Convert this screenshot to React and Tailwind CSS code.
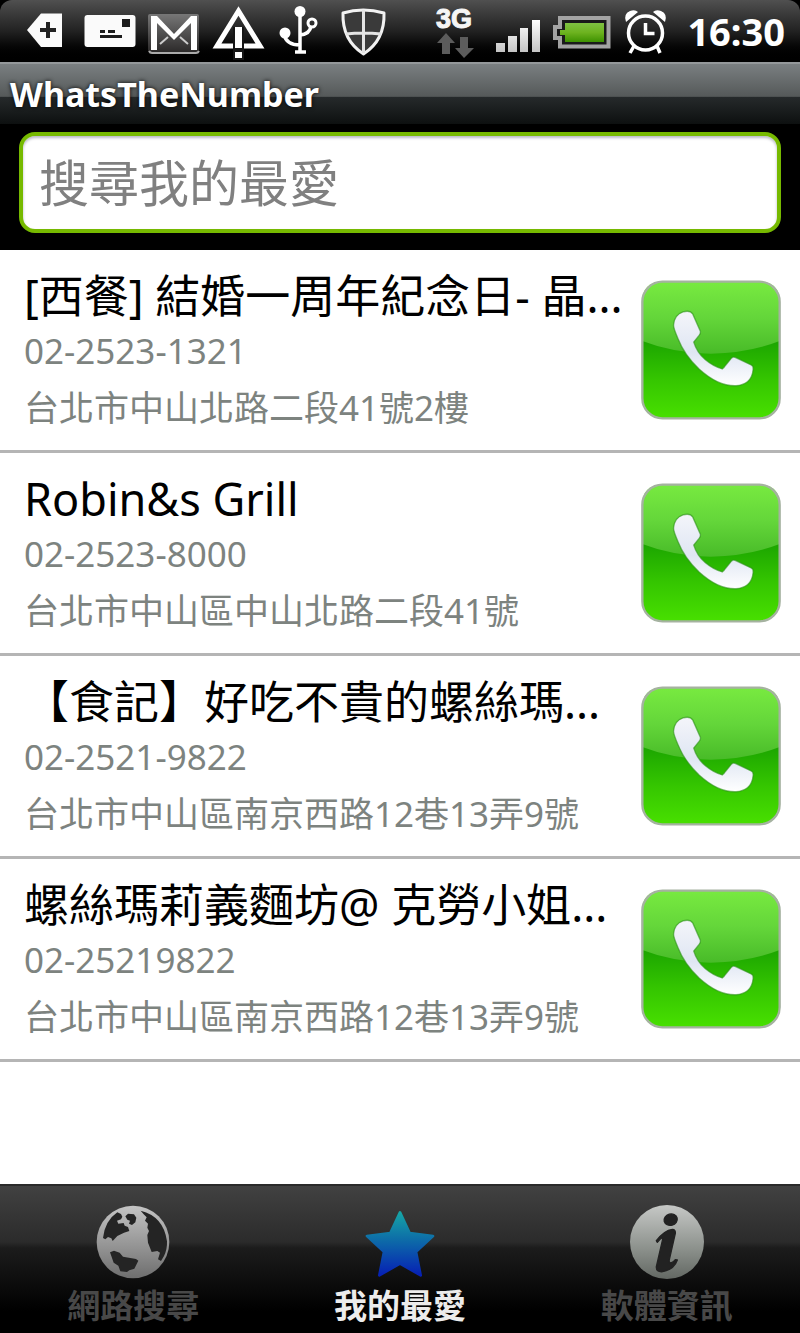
import { useState } from 'react'

const PLACES = [
  { name: '[西餐] 結婚一周年紀念日- 晶...', phone: '02-2523-1321', address: '台北市中山北路二段41號2樓' },
  { name: 'Robin&s Grill', phone: '02-2523-8000', address: '台北市中山區中山北路二段41號' },
  { name: '【食記】好吃不貴的螺絲瑪...', phone: '02-2521-9822', address: '台北市中山區南京西路12巷13弄9號' },
  { name: '螺絲瑪莉義麵坊@ 克勞小姐...', phone: '02-25219822', address: '台北市中山區南京西路12巷13弄9號' },
]

function NotificationIcons() {
  return (
    <div className="flex items-center pl-5">
      <svg width="54" height="62" viewBox="20 0 54 62" aria-hidden="true">
        <path d="M27 30 41 13.500H62V47H41Z" fill="#fafafa" />
        <path d="M48 22v16M40 30h16" stroke="#222" strokeWidth="4" />
      </svg>
      <svg width="67" height="62" viewBox="74 0 67 62" aria-hidden="true">
        <rect x="84.500" y="15" width="51" height="32" rx="3" fill="#fafafa" />
        <path d="M122 19h8v8h-8zM100 30h5v3h-5zM108 30h7v3h-7zM100 35h22v3h-22z" fill="#1c1c1c" />
      </svg>
      <svg width="65" height="62" viewBox="141 0 65 62" aria-hidden="true">
        <defs>
          <linearGradient id="mail" x1="0" y1="0" x2="0" y2="1">
            <stop offset="0" stopColor="#777" />
            <stop offset="1" stopColor="#2c2a2a" />
          </linearGradient>
        </defs>
        <rect x="148" y="14" width="51" height="38" rx="2" fill="url(#mail)" />
        <path d="m160 44 8-7M188 44l-8-7" stroke="#ccc" strokeWidth="2" />
        <path d="M151 16h6l17 18 17-18h6v34h-6V23l-17 17-17-17v27h-6z" fill="#fff" />
        <path d="M149 51q1 2 3 2h44q2 0 3-2" fill="none" stroke="#aaa" strokeWidth="2" />
      </svg>
      <svg width="66" height="62" viewBox="206 0 66 62" aria-hidden="true">
        <path d="M238.500 11 217 46h43z" fill="none" stroke="#fff" strokeWidth="5" />
        <path d="M233 27h11v33h-11z" fill="#161616" />
        <path d="M235 27h7v21h-7zM235 52h7v6h-7z" fill="#fff" />
      </svg>
      <svg width="57" height="62" viewBox="272 0 57 62" aria-hidden="true">
        <g fill="none" stroke="#fff" strokeWidth="3.500">
          <path d="M300 11v41M284 34q2 11 16 11M300 35q10-1 11-9" />
          <path d="M295 52h11" />
          <circle cx="312" cy="23" r="4" strokeWidth="3" />
        </g>
        <circle cx="300" cy="11.500" r="5.500" fill="#fff" />
        <circle cx="285" cy="33" r="5.500" fill="#fff" />
      </svg>
      <svg width="71" height="62" viewBox="329 0 71 62" aria-hidden="true">
        <path d="M343 13q20-6 41 0 1 27-20.500 41Q342 40 343 13Z" fill="#3a3a3a" stroke="#f2f2f2" strokeWidth="3" strokeLinejoin="round" />
        <path d="M363.500 10v43M346 34q17-2 35 0" fill="none" stroke="#e4e4e4" strokeWidth="3" />
      </svg>
    </div>
  )
}

function SystemIcons() {
  return (
    <div className="flex items-center">
      <svg width="54" height="62" viewBox="430 0 54 62" role="img" aria-label="3G">
        <text x="436" y="28" fontSize="27" fontWeight="700" fill="#f5f5f5" stroke="#f5f5f5" fontFamily="'Liberation Sans', Arial, sans-serif">3G</text>
        <path d="m446 33 9 10h-5v11h-8V43h-5zM460 37h8v11h6l-10 10-9-10h5z" fill="#5c5c5c" />
      </svg>
      <svg width="63" height="62" viewBox="484 0 63 62" aria-hidden="true">
        <defs>
          <linearGradient id="bars" x1="0" y1="0" x2="0" y2="1">
            <stop offset="0" stopColor="#fff" />
            <stop offset="1" stopColor="#c4c4c4" />
          </linearGradient>
        </defs>
        <path d="M496 43h9v9h-9zM508 36h9v16h-9zM520 28h8v24h-8zM532 20h8v32h-8z" fill="url(#bars)" />
      </svg>
      <svg width="70" height="62" viewBox="547 0 70 62" aria-hidden="true">
        <defs>
          <linearGradient id="charge" x1="0" y1="0" x2="0" y2="1">
            <stop offset="0" stopColor="#7fc242" />
            <stop offset=".5" stopColor="#6db31f" />
            <stop offset="1" stopColor="#3d9100" />
          </linearGradient>
        </defs>
        <path d="M560 18h48.500v28.500H560V38h-5V27h5z" fill="#1a1a1a" stroke="#a3a3a3" strokeWidth="4" />
        <path d="M565 23h39v19h-39v-7h-5v-5h5z" fill="url(#charge)" />
      </svg>
      <svg width="58" height="62" viewBox="617 0 58 62" aria-hidden="true">
        <g fill="none" stroke="#fff" strokeWidth="3.500">
          <circle cx="645.500" cy="33" r="17" />
          <path d="M645.500 23v10.500h9M634 46l-4 7M657 46l3 7" />
        </g>
        <path d="M626 22q-3-8 4-11 5-2 8 1zM665 22q3-8-4-11-5-2-8 1z" fill="#fff" />
      </svg>
    </div>
  )
}

function CallIcon() {
  return (
    <svg className="block h-full w-full" viewBox="66 60 417 415" aria-hidden="true">
      <defs>
        <linearGradient id="call" x1="0" y1="0" x2="0" y2="1">
          <stop offset="0" stopColor="#4fd020" />
          <stop offset=".45" stopColor="#1da700" />
          <stop offset=".72" stopColor="#35c600" />
          <stop offset="1" stopColor="#48e000" />
        </linearGradient>
        <linearGradient id="gloss" x1="0" y1="0" x2="0" y2="1">
          <stop offset="0" stopColor="#78ea40" />
          <stop offset=".5" stopColor="#64d63a" />
          <stop offset="1" stopColor="#48bb28" />
        </linearGradient>
        <linearGradient id="handset" x1="0" y1="0" x2="0" y2="1">
          <stop offset="0" stopColor="#f4f5fa" />
          <stop offset=".55" stopColor="#dfe6f3" />
          <stop offset="1" stopColor="#ffffff" />
        </linearGradient>
      </defs>
      <rect x="70" y="64" width="409" height="407" rx="60" fill="url(#call)" />
      <path d="M70 124q0-60 60-60h289q60 0 60 60v117q-90 35-205 38-115-3-204-38z" fill="url(#gloss)" />
      <rect x="70" y="64" width="409" height="407" rx="60" fill="none" stroke="#a5b2a0" strokeWidth="7" />
      <path
        d="M191 154q21-6 29 6l23 52q1 7-4 12l-16 20q10 32 34 52 25 21 51 28 6-4 10-11l18-22q5-4 12-1l46 22q7 3 6 13-2 25-17 37-13 10-34 12-53 2-110-50-44-42-63-91-14-32-13-40 2-30 28-39z"
        fill="url(#handset)"
        stroke="#2c8f18"
        strokeOpacity=".6"
        strokeWidth="4"
      />
    </svg>
  )
}

function GlobeIcon() {
  return (
    <svg width="76" height="76" viewBox="283 101 228 228" aria-hidden="true">
      <defs>
        <linearGradient id="globe" x1="0" y1="0" x2="0" y2="1">
          <stop offset="0" stopColor="#c4c4c4" />
          <stop offset="1" stopColor="#6e6e6e" />
        </linearGradient>
      </defs>
      <circle cx="397" cy="215" r="109" fill="url(#globe)" />
      <g fill="#242424">
        <path d="M350 126q-37 25-43 77l7 4 8-7 10 4 4 8 14-15 20-10 16-5-4-12-10-4-3-8-16 2-4-9 12-4 4-8-4-8z" />
        <path d="m374 138 8-8 18 2 7 10-3 14-10 8-9-4 3-9-8-3z" />
        <path d="M420 121q69 17 79 92 1 24-9 44l-9 15-9-5 6-20-8-5-17 3-11-28-2-23 5-12-5-10 2-12-9-9 5-10-9-9z" />
        <path d="m328 246 12-5 17 6 10 12 39 7 7 5-12 24-15 5-7 5-20-2-6-17-14-9z" />
      </g>
    </svg>
  )
}

function StarIcon() {
  return (
    <svg width="76" height="76" viewBox="276 98 228 228" aria-hidden="true">
      <defs>
        <linearGradient id="star" x1="0" y1="0" x2="0" y2="1">
          <stop offset="0" stopColor="#16a5a6" />
          <stop offset=".45" stopColor="#0d6aa8" />
          <stop offset="1" stopColor="#0620b4" />
        </linearGradient>
      </defs>
      <path
        d="m390 123 29 62 70 9-51 47 14 71-62-35-62 35 14-71-51-47 70-9z"
        fill="url(#star)"
        stroke="url(#star)"
        strokeWidth="8"
        strokeLinejoin="round"
      />
    </svg>
  )
}

function InfoIcon() {
  return (
    <svg width="76" height="76" viewBox="296 103 228 228" aria-hidden="true">
      <defs>
        <linearGradient id="info" x1="0" y1="0" x2="0" y2="1">
          <stop offset="0" stopColor="#c6c8c6" />
          <stop offset=".6" stopColor="#8b908b" />
          <stop offset="1" stopColor="#636863" />
        </linearGradient>
      </defs>
      <circle cx="410" cy="217" r="111" fill="url(#info)" />
      <g fill="#222" stroke="#222" strokeWidth="4" strokeLinejoin="round">
        <ellipse cx="421" cy="150" rx="20" ry="17" transform="rotate(-15 421 150)" />
        <path d="M378 213q24-31 48-34 10 0 9 12l-18 79q-2 10 5 10 6-1 13-10l6 1q-9 28-44 35-20 2-19-15l18-78q2-9-4-7l-11 12z" />
      </g>
    </svg>
  )
}

const TABS = [
  { id: 'web', label: '網路搜尋', Icon: GlobeIcon },
  { id: 'favorites', label: '我的最愛', Icon: StarIcon },
  { id: 'about', label: '軟體資訊', Icon: InfoIcon },
]

export default function App() {
  const [query, setQuery] = useState('')
  const [tab, setTab] = useState('favorites')
  const places = PLACES.filter((p) => (p.name + p.phone + p.address).includes(query))

  return (
    <div className="flex min-h-screen flex-col bg-white font-['Noto_Sans','Noto_Sans_CJK_TC',sans-serif]">
      <div className="bg-black">
        <div className="flex h-[62px] items-center justify-between rounded-t-xl bg-linear-to-b from-[#505050] via-[#222222] to-black pr-[15px]">
          <NotificationIcons />
          <div className="flex items-center">
            <SystemIcons />
            <time className="pl-3 text-[38px] leading-[62px] font-bold text-white">16:30</time>
          </div>
        </div>
      </div>

      <header className="border-t-2 border-[#94989a] bg-[linear-gradient(#7a7f81,#555959_54%,#262a2b_55%,#0d1010)] px-[10px]">
        <h1 className="text-[34px] leading-[60px] font-bold text-white [text-shadow:0_0_4px_#000]">WhatsTheNumber</h1>
      </header>

      <div className="bg-black px-[19px] pt-2 pb-[17px]">
        <input
          type="text"
          aria-label="搜尋我的最愛"
          placeholder="搜尋我的最愛"
          value={query}
          onChange={(e) => setQuery(e.target.value)}
          className="block h-[101px] w-full rounded-2xl border-4 border-[#76b900] bg-white px-4 text-[50px] text-black shadow-[inset_0_2px_3px_#b8b8c4] outline-none placeholder:text-[#808080] placeholder:opacity-100"
        />
      </div>

      <ul className="flex-1">
        {places.map((place) => (
          <li
            key={place.name}
            className="flex items-center justify-between border-b-3 border-[#b5b5b5] pr-[19px] pl-6"
          >
            <div className="min-w-0 pt-[18px] pb-3 whitespace-nowrap">
              <h2 className="text-[45px] leading-[56px] text-black">{place.name}</h2>
              <p className="text-[35px] leading-[54px] text-[#7d837f]">{place.phone}</p>
              <p className="text-[35px] leading-[60px] text-[#7d837f]">{place.address}</p>
            </div>
            <button type="button" aria-label={`撥打 ${place.phone}`} className="h-[140px] w-[140px] shrink-0">
              <CallIcon />
            </button>
          </li>
        ))}
      </ul>

      <nav className="grid h-[149px] grid-cols-3 border-t-2 border-[#2a2a2a] bg-[linear-gradient(#414141,#2b2b2b_38%,#1c1c1c_42%,#000_85%)]">
        {TABS.map(({ id, label, Icon }) => (
          <button
            key={id}
            type="button"
            aria-current={tab === id ? 'page' : undefined}
            onClick={() => setTab(id)}
            className="flex flex-col items-center pt-[18px]"
          >
            <Icon />
            <span
              className={`text-[33px] leading-[52px] font-bold ${tab === id ? 'text-[#ececec]' : 'text-[#484848]'}`}
            >
              {label}
            </span>
          </button>
        ))}
      </nav>
    </div>
  )
}
